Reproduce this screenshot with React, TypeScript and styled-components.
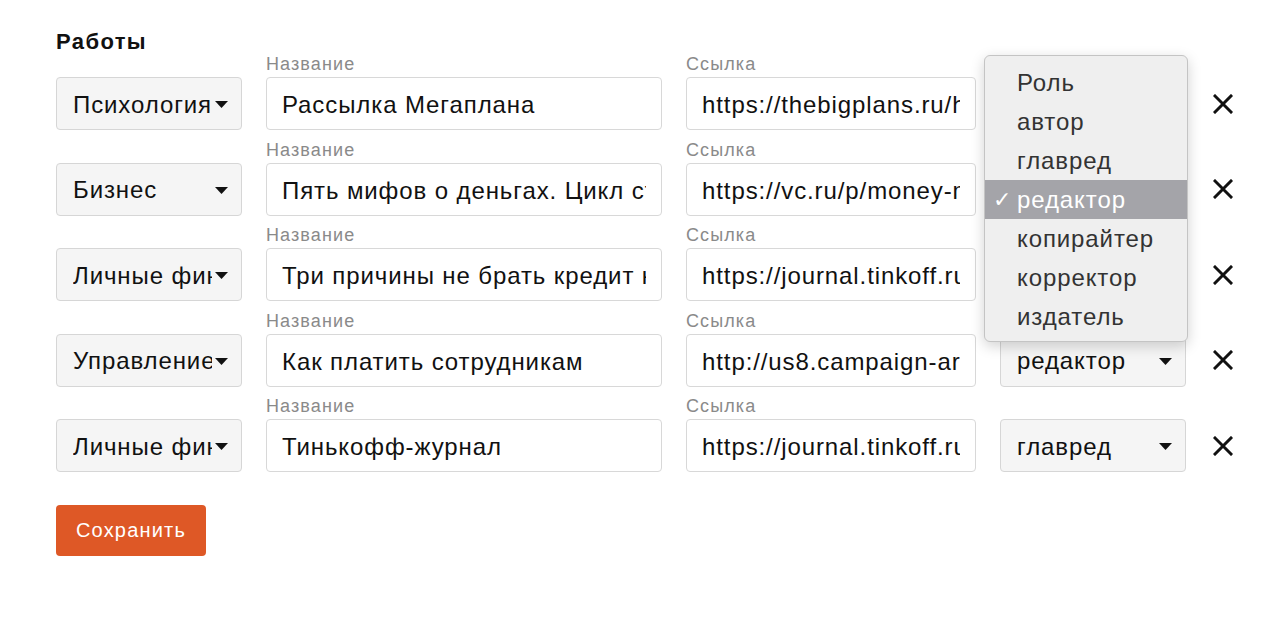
import React from "react";
import styled, { createGlobalStyle } from "styled-components";

const Global = createGlobalStyle`
  html, body { margin: 0; padding: 0; background: #fff; }
  body { font-family: "Liberation Sans", Arial, Helvetica, sans-serif; color: #111; }
  * { box-sizing: border-box; }
`;

const Page = styled.div`
  padding: 31px 0 0 56px;
  width: 1280px;
  height: 618px;
`;

const Title = styled.h2`
  margin: 0;
  font-size: 22px;
  line-height: 22px;
  font-weight: 700;
  letter-spacing: 1.4px;
  color: #111;
`;

const Rows = styled.div`
  display: flex;
  flex-direction: column;
  gap: 8.5px;
`;

const Row = styled.div`
  display: flex;
  align-items: flex-end;
`;

const Field = styled.div<{ $w: number; $ml?: number }>`
  display: flex;
  flex-direction: column;
  width: ${(p) => p.$w}px;
  margin-left: ${(p) => p.$ml ?? 0}px;
  position: relative;
`;

const Label = styled.div`
  font-size: 18px;
  line-height: 22px;
  height: 22px;
  margin-bottom: 2px;
  letter-spacing: 1.1px;
  color: #8a8a8a;
`;

const Input = styled.input`
  width: 100%;
  height: 53px;
  border: 1px solid #d8d8d8;
  border-radius: 4px;
  padding: 3px 15px 0;
  font-family: "Liberation Sans", Arial, sans-serif;
  font-size: 24px;
  letter-spacing: 0.9px;
  color: #111;
  background: #fff;
  outline: none;
`;

const SelectBox = styled.div`
  width: 100%;
  height: 53px;
  border: 1px solid #d6d6d6;
  border-radius: 4px;
  background: #f5f5f5;
  display: flex;
  align-items: center;
  padding: 2px 13px 0 16px;
  font-size: 24px;
  letter-spacing: 0.9px;
  color: #111;
`;

const SelectText = styled.span`
  flex: 1;
  overflow: hidden;
  white-space: nowrap;
  min-width: 0;
`;

const Arrow = styled.svg`
  flex: none;
  width: 13px;
  height: 7px;
  margin-left: 3px;
`;

const Remove = styled.button`
  margin-left: 24px;
  width: 26px;
  height: 53px;
  border: none;
  background: none;
  padding: 0;
  display: flex;
  align-items: center;
  justify-content: center;
  cursor: pointer;
`;

const Menu = styled.div`
  position: absolute;
  left: -16px;
  top: -108px;
  width: 204px;
  padding: 7.5px 0 4.5px;
  background: #efefef;
  border: 1px solid #c4c4c4;
  border-radius: 6px;
  box-shadow: 0 4px 14px rgba(0, 0, 0, 0.18);
  z-index: 10;
`;

const MenuItem = styled.div<{ $active?: boolean }>`
  position: relative;
  height: 39px;
  line-height: 39px;
  padding-left: 32px;
  font-size: 24px;
  letter-spacing: 0.9px;
  color: ${(p) => (p.$active ? "#fff" : "#333")};
  background: ${(p) => (p.$active ? "#a4a4a9" : "transparent")};
`;

const Check = styled.span`
  position: absolute;
  left: 8px;
  top: 0;
  font-size: 22px;
  font-family: "DejaVu Sans", sans-serif;
  font-weight: 700;
`;

const SaveButton = styled.button`
  margin-top: 33px;
  width: 150px;
  height: 51px;
  border: none;
  border-radius: 4px;
  background: #de5826;
  color: #fff;
  font-family: "Liberation Sans", Arial, sans-serif;
  font-size: 20px;
  letter-spacing: 1.2px;
  cursor: pointer;
`;

const TriangleIcon = () => (
  <Arrow viewBox="0 0 13 7">
    <path d="M0 0 L13 0 L6.5 7 Z" fill="#111" />
  </Arrow>
);

const CloseIcon = () => (
  <svg width="20" height="20" viewBox="0 0 20 20">
    <path d="M2 2 L18 18 M18 2 L2 18" stroke="#111" strokeWidth="3" strokeLinecap="square" fill="none" />
  </svg>
);

const roles = ["Роль", "автор", "главред", "редактор", "копирайтер", "корректор", "издатель"];

type Work = { cat: string; name: string; link: string; role: string; open?: boolean };

const works: Work[] = [
  { cat: "Психология", name: "Рассылка Мегаплана", link: "https://thebigplans.ru/hr/newsletter", role: "автор" },
  { cat: "Бизнес", name: "Пять мифов о деньгах. Цикл статей", link: "https://vc.ru/p/money-myths", role: "редактор", open: true },
  { cat: "Личные финансы", name: "Три причины не брать кредит на отпуск", link: "https://journal.tinkoff.ru/credit", role: "автор" },
  { cat: "Управление", name: "Как платить сотрудникам", link: "http://us8.campaign-archive.com/", role: "редактор" },
  { cat: "Личные финансы", name: "Тинькофф-журнал", link: "https://journal.tinkoff.ru/", role: "главред" },
];

export default function App() {
  return (
    <Page>
      <Global />
      <Title>Работы</Title>
      <Rows>
        {works.map((w, i) => (
          <Row key={i}>
            <Field $w={186}>
              <SelectBox>
                <SelectText>{w.cat}</SelectText>
                <TriangleIcon />
              </SelectBox>
            </Field>
            <Field $w={396} $ml={24}>
              <Label>Название</Label>
              <Input defaultValue={w.name} readOnly />
            </Field>
            <Field $w={290} $ml={24}>
              <Label>Ссылка</Label>
              <Input defaultValue={w.link} readOnly />
            </Field>
            <Field $w={186} $ml={24}>
              <SelectBox>
                <SelectText>{w.role}</SelectText>
                <TriangleIcon />
              </SelectBox>
              {w.open && (
                <Menu>
                  {roles.map((r) => (
                    <MenuItem key={r} $active={r === w.role}>
                      {r === w.role && <Check>✓</Check>}
                      {r}
                    </MenuItem>
                  ))}
                </Menu>
              )}
            </Field>
            <Remove aria-label="Удалить">
              <CloseIcon />
            </Remove>
          </Row>
        ))}
      </Rows>
      <SaveButton>Сохранить</SaveButton>
    </Page>
  );
}
